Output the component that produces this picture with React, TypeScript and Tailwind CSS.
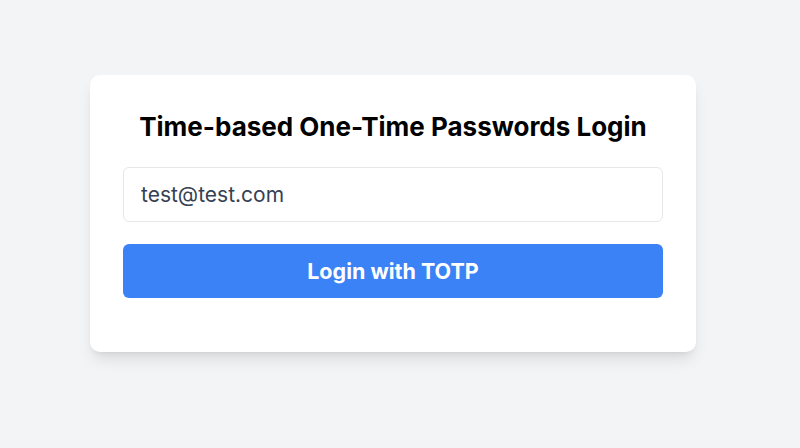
export default function App() {
    return (
        <div
            className="min-h-screen w-full bg-[#f3f4f6] pt-[75px] pl-[90px]"
            style={{ fontFamily: 'Inter, "Liberation Sans", sans-serif' }}
        >
            <div className="w-[606px] h-[277px] bg-white rounded-[10px] shadow-lg px-[33px] pt-[34px]">
                <h1 className="text-[26px] leading-[36px] font-bold text-black text-center">
                    Time-based One-Time Passwords Login
                </h1>
                <div className="mt-[22px] flex flex-col gap-[22px]">
                    <input
                        type="email"
                        defaultValue="test@test.com"
                        className="h-[55px] w-full rounded-md border border-gray-200 px-[17px] text-[21px] text-gray-700 outline-none"
                    />
                    <button className="h-[54px] w-full rounded-md bg-[#3b82f6] text-white text-[21.5px] font-bold">
                        Login with TOTP
                    </button>
                </div>
            </div>
        </div>
    );
}
